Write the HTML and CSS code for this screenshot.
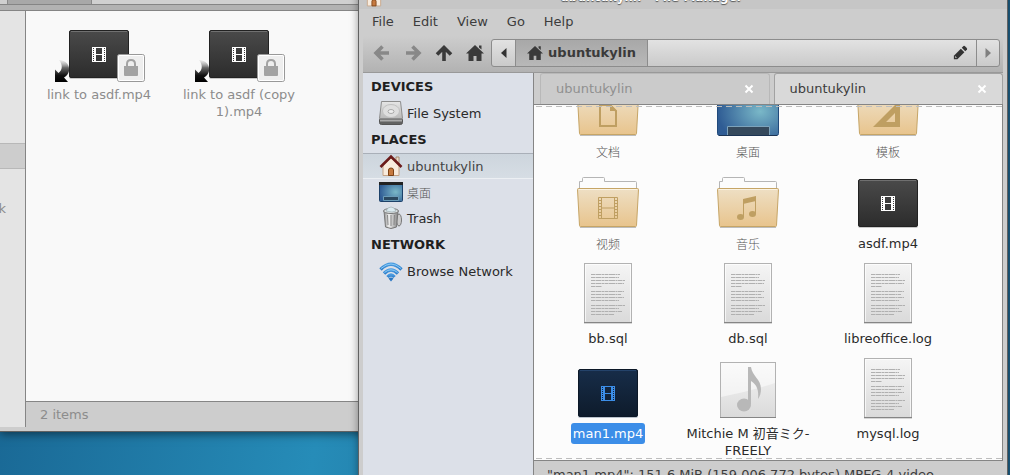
FILE: index.html
```html
<!DOCTYPE html>
<html lang="en">
<head>
<meta charset="utf-8">
<title>File Manager</title>
<link rel="stylesheet" href="styles.css">
</head>
<body>
<svg class="defs" aria-hidden="true">
  <defs>
    <linearGradient id="gTile" x1="0" y1="0" x2="0" y2="1"><stop offset="0" stop-color="#4a4a4a"/><stop offset="1" stop-color="#2c2c2c"/></linearGradient>
    <linearGradient id="gTileSel" x1="0" y1="0" x2="0" y2="1"><stop offset="0" stop-color="#172d49"/><stop offset="1" stop-color="#0e1b2b"/></linearGradient>
    <linearGradient id="gFolder" x1="0" y1="0" x2="0" y2="1"><stop offset="0" stop-color="#eedfc4"/><stop offset="1" stop-color="#e8c48d"/></linearGradient>
    <linearGradient id="gPaper" x1="0" y1="0" x2="0" y2="1"><stop offset="0" stop-color="#f5f5f5"/><stop offset="1" stop-color="#dadada"/></linearGradient>
    <linearGradient id="gArrow" x1="0" y1="0" x2="0" y2="1"><stop offset="0" stop-color="#bbb" stop-opacity=".2"/><stop offset=".35" stop-color="#666"/><stop offset=".7" stop-color="#111"/><stop offset="1" stop-color="#000"/></linearGradient>
    <radialGradient id="gDesk" cx=".7" cy=".5" r=".7"><stop offset="0" stop-color="#7ab8c8"/><stop offset="1" stop-color="#2f5c94"/></radialGradient>
    <linearGradient id="gDisk" x1="0" y1="0" x2="0" y2="1"><stop offset="0" stop-color="#e6e6e6"/><stop offset="1" stop-color="#b9b9b9"/></linearGradient>
    <linearGradient id="gCan" x1="0" y1="0" x2="1" y2="0"><stop offset="0" stop-color="#8d8d8d"/><stop offset=".35" stop-color="#f0f0f0"/><stop offset="1" stop-color="#858585"/></linearGradient>
    <linearGradient id="gWifi" x1="0" y1="0" x2="0" y2="1"><stop offset="0" stop-color="#4a9be0"/><stop offset="1" stop-color="#2f80cc"/></linearGradient>
    <g id="film">
      <path fill-rule="evenodd" d="M0 0h14v15H0zM4 1v6h6V1zM4 8v6h6V8zM1 1v1h1V1zM1 3v1h1V3zM1 5v1h1V5zM1 7v1h1V7zM1 9v1h1V9zM1 11v1h1v-1zM1 13v1h1v-1zM12 1v1h1V1zM12 3v1h1V3zM12 5v1h1V5zM12 7v1h1V7zM12 9v1h1V9zM12 11v1h1v-1zM12 13v1h1v-1z"/>
    </g>
    <g id="tile">
      <rect x="2" y="12" width="60" height="48" rx="2" fill="#000" opacity=".2"/>
      <rect x="2.5" y="11.5" width="59" height="47" rx="1.5" fill="url(#gTile)" stroke="#222"/>
      <path d="M4 12.5h56" stroke="#707070"/>
      <use href="#film" x="25" y="28" fill="#fff"/>
    </g>
    <g id="folder">
      <path d="M3.500 21V13.500H6.500V10.500Q6.500 9.500 7.500 9.500H27.500Q28.500 9.500 28.500 10.500V13.500H59.500Q60.500 13.500 60.500 14.500V21" fill="#fcfcfc" stroke="#b5b5b5"/>
      <path d="M4 59.500H60" stroke="#000" stroke-opacity=".25"/>
      <path d="M2.500 20.500H61.500Q62.500 20.500 62.500 21.500L60.500 57.500Q60.500 58.500 59.500 58.500H4.500Q3.500 58.500 3.500 57.500L1.500 21.500Q1.500 20.500 2.500 20.500z" fill="url(#gFolder)" stroke="#c6a566"/>
      <path d="M3 21.500H61" stroke="#fbf3e2"/>
    </g>
    <g id="page">
      <path d="M8 60h48" stroke="#000" stroke-opacity=".3"/>
      <rect x="8.500" y=".5" width="47" height="59" fill="url(#gPaper)" stroke="#b2b2b2"/>
      <path d="M9.500 58.500V1.500h45v57" fill="none" stroke="#fff" stroke-opacity=".7"/>
      <path d="M8 59.500h48" stroke="#858585"/>
      <path d="M15 11.500h29M15 14.500h28M15 17.500h34M15 20.500h33M15 23.500h11M15 28.500h33M15 31.500h30M15 34.500h33M15 37.500h28M15 42.500h34M15 45.500h28M15 48.500h31M15 51.500h23" stroke="#b0b0b0" stroke-dasharray="4 .5 6 .5 2 .5"/>
    </g>
    <g id="locked">
      <path d="M-8 41C-1 41 3 46 2 52Q1 56-3 58.500L1 63H-12V50.500L-8.500 54C-4.500 51-4 46-8 41z" fill="url(#gArrow)"/>
      <rect x="50.500" y="35.500" width="27" height="27" rx="2" fill="#eee" stroke="#999"/>
      <rect x="51.500" y="36.500" width="25" height="25" rx="1" fill="none" stroke="#fff"/>
      <path d="M57 47h14v9q0 1-1 1H58q-1 0-1-1z" fill="#a2a2a2"/>
      <path d="M60 48v-3q0-4 4-4t4 4v3" fill="none" stroke="#a2a2a2" stroke-width="2"/>
    </g>
    <g id="house">
      <path d="M17 3h3v7h-3z" fill="#e9dccb" stroke="#a98b72"/>
      <path d="M4 11L12 4l8 7v10.500H4z" fill="#f8ebdd" stroke="#c5a386"/>
      <path d="M1.500 13L12 2.500 22.500 13" fill="none" stroke="#6b1a1a" stroke-width="2.600"/>
      <path d="M9.500 21.500V16q0-2 2.500-2t2.500 2v5.500z" fill="#c6793f" stroke="#7b4216"/>
    </g>
    <path id="home" d="M9 1l9 8.500H15.500V17h-5v-5h-3v5h-5V9.500H0zM13 1.500h2.500v4l-2.500-2z"/>
  </defs>
</svg>

<main class="desktop">
  <section class="window back">
    <div class="back-tabs"><span class="back-tab"></span></div>
    <div class="back-band"></div>
    <div class="back-body">
      <aside class="back-side">
        <div class="back-selected"></div>
        <div class="back-place"><span>Browse Network</span></div>
      </aside>
      <div class="back-main">
        <div class="files">
          <figure class="file">
            <svg viewBox="0 0 64 60" width="64" height="60"><use href="#tile"/><use href="#locked"/></svg>
            <figcaption>link to asdf.mp4</figcaption>
          </figure>
          <figure class="file">
            <svg viewBox="0 0 64 60" width="64" height="60"><use href="#tile"/><use href="#locked"/></svg>
            <figcaption>link to asdf (copy 1).mp4</figcaption>
          </figure>
        </div>
        <footer class="back-status">2 items</footer>
      </div>
    </div>
  </section>

  <section class="window front">
    <header class="titlebar">
      <svg viewBox="0 0 24 24" width="20" height="20"><use href="#house"/></svg>
      <span class="title">ubuntukylin - File Manager</span>
    </header>
    <nav class="menubar">
      <button>File</button><button>Edit</button><button>View</button><button>Go</button><button>Help</button>
    </nav>
    <div class="toolbar">
      <button class="tool off" aria-label="Back"><svg viewBox="0 0 18 18" width="18" height="18"><path d="M16 9H4M9.500 2.500L3 9l6.500 6.500" fill="none" stroke="currentColor" stroke-width="3.600"/></svg></button>
      <button class="tool off" aria-label="Forward"><svg viewBox="0 0 18 18" width="18" height="18"><path d="M2 9h12M8.500 2.500L15 9l-6.500 6.500" fill="none" stroke="currentColor" stroke-width="3.600"/></svg></button>
      <button class="tool" aria-label="Up"><svg viewBox="0 0 18 18" width="18" height="18"><path d="M9 17V5M2 10.500L9 3.500l7 7" fill="none" stroke="currentColor" stroke-width="3.600"/></svg></button>
      <button class="tool" aria-label="Home"><svg viewBox="0 0 18 18" width="18" height="18"><use href="#home" fill="currentColor"/></svg></button>
      <div class="pathbar">
        <button class="path-prev" aria-label="Scroll left"><svg viewBox="0 0 6 10" width="6" height="10"><path d="M5.500 0v10L0 5z" fill="#333"/></svg></button>
        <button class="path-current"><svg viewBox="0 0 18 18" width="16" height="16"><use href="#home" fill="currentColor"/></svg>ubuntukylin</button>
        <button class="path-edit" aria-label="Edit location"><svg viewBox="0 0 16 16" width="14" height="14"><path d="M1 15v-4l8-8 4 4-8 8z" fill="#333"/><path d="M10 2l2-2q1-.5 2 .5l1.500 1.500q1 1 .5 2l-2 2z" fill="#333"/><path d="M2.500 13.500v-2l2 2z" fill="#ddd"/></svg></button>
        <button class="path-next" aria-label="Scroll right"><svg viewBox="0 0 6 10" width="6" height="10"><path d="M.5 0v10L6 5z" fill="#808080"/></svg></button>
      </div>
    </div>
    <div class="body">
      <aside class="sidebar">
        <h2>DEVICES</h2>
        <a href="#fs" class="place">
          <svg viewBox="0 0 24 24" width="24" height="24"><path d="M2.500.5h19l2 17H.5z" fill="url(#gDisk)" stroke="#8c8c8c"/><path d="M.5 18.500h23v3q0 2-2 2h-19q-2 0-2-2z" fill="#626262" stroke="#555"/><path d="M1 18.500h22v2H1z" fill="#aaa"/><ellipse cx="12" cy="10" rx="8.500" ry="6.500" fill="#dedede" stroke="#c0c0c0"/><ellipse cx="12" cy="10.500" rx="3" ry="2" fill="#eee" stroke="#aaa"/></svg>File System</a>
        <h2>PLACES</h2>
        <a href="#home-dir" class="place selected">
          <svg viewBox="0 0 24 24" width="24" height="24"><use href="#house"/></svg>ubuntukylin</a>
        <a href="#desk" class="place cjk">
          <svg viewBox="0 0 24 24" width="24" height="24"><rect x=".5" y="2.500" width="23" height="19" rx="1" fill="url(#gDesk)" stroke="#1d4169"/><path d="M0 2h24v3H0z" fill="#222"/><path d="M4.500 16.500h15v4h-15z" fill="#2b4960" stroke="#6a9cb8"/></svg>桌面</a>
        <a href="#trash" class="place">
          <svg viewBox="0 0 24 24" width="24" height="24"><ellipse cx="20" cy="14" rx="2.500" ry="6" fill="#ccc" stroke="#777"/><path d="M5 5h14l-1.500 16q-5.500 3-11 0z" fill="url(#gCan)" stroke="#777"/><path d="M8.500 9l.5 10M12 9v11M15.500 9l-.5 10" stroke="#888"/><ellipse cx="12" cy="5" rx="7.500" ry="2.500" fill="#d9dedf" stroke="#777"/><path d="M7 5l2-3 3-1 3 1 2 3-4 1z" fill="#dcebf0" stroke="#98a8ad" stroke-width=".6"/></svg>Trash</a>
        <h2>NETWORK</h2>
        <a href="#net" class="place">
          <svg viewBox="0 0 24 24" width="24" height="24"><g fill="none" stroke="url(#gWifi)" stroke-width="3.400"><path d="M1.500 10.500Q12 0 22.500 10.500"/><path d="M5 14.500Q12 7.500 19 14.500"/><path d="M8.500 18Q12 14 15.500 18"/></g><path d="M2 9.500Q12 .5 22 9.500M5.500 13.500Q12 8 18.500 13.500" fill="none" stroke="#8bcbf5"/><path d="M9.500 19.500q2.500-2 5 0L12 22.500z" fill="#2a78c4"/></svg>Browse Network</a>
      </aside>
      <div class="notebook">
        <div class="tabs">
          <div class="tab"><button class="tab-name">ubuntukylin</button><button class="close" aria-label="Close tab"><svg viewBox="0 0 8 8" width="8" height="8"><path d="M.5.5l7 7M7.500.5l-7 7" stroke="#fff" stroke-width="2"/></svg></button></div>
          <div class="tab active"><button class="tab-name">ubuntukylin</button><button class="close" aria-label="Close tab"><svg viewBox="0 0 8 8" width="8" height="8"><path d="M.5.5l7 7M7.500.5l-7 7" stroke="#fff" stroke-width="2"/></svg></button></div>
        </div>
        <div class="pane">
          <div class="files scrolled">
            <figure class="file cjk">
              <svg viewBox="0 3 64 57" width="64" height="57"><use href="#folder"/><path d="M24 29h10l6 6v15H24z" fill="none" stroke="#bf9f62" stroke-width="2"/><path d="M34 28l7 7h-7z" fill="#bf9f62"/></svg>
              <figcaption>文档</figcaption>
            </figure>
            <figure class="file cjk">
              <svg viewBox="0 3 64 57" width="64" height="57"><rect x="1.500" y="11.500" width="61" height="48" rx="2" fill="url(#gDesk)" stroke="#214a7b"/><path d="M11.500 59V50.500h42V59" fill="#35495c" stroke="#7da3bb"/><path d="M3 59.500h58" stroke="#1c3453"/></svg>
              <figcaption>桌面</figcaption>
            </figure>
            <figure class="file cjk">
              <svg viewBox="0 3 64 57" width="64" height="57"><use href="#folder"/><path d="M17 51L44 24v27zM30 46h9v-9z" fill="#bf9f62" fill-rule="evenodd"/></svg>
              <figcaption>模板</figcaption>
            </figure>
            <figure class="file cjk">
              <svg viewBox="0 3 64 57" width="64" height="57"><use href="#folder"/><path d="M22.500 29.500h19v21h-19zM25.500 29v22M38.500 29v22M26 40h12" fill="none" stroke="#bf9f62"/><path d="M24 32v18M40 32v18" stroke="#bf9f62" stroke-width="3" stroke-dasharray="1 2"/></svg>
              <figcaption>视频</figcaption>
            </figure>
            <figure class="file cjk">
              <svg viewBox="0 3 64 57" width="64" height="57"><use href="#folder"/><path d="M27 31l13-3v5l-13 3z" fill="#bf9f62"/><path d="M27.500 32v17M39.500 29v17" stroke="#bf9f62"/><ellipse cx="24.500" cy="49" rx="3.500" ry="3" fill="#bf9f62"/><ellipse cx="36.500" cy="46" rx="3.500" ry="3" fill="#bf9f62"/></svg>
              <figcaption>音乐</figcaption>
            </figure>
            <figure class="file">
              <svg viewBox="0 3 64 57" width="64" height="57"><use href="#tile"/></svg>
              <figcaption>asdf.mp4</figcaption>
            </figure>
            <figure class="file">
              <svg viewBox="0 0 64 60" width="64" height="60"><use href="#page"/></svg>
              <figcaption>bb.sql</figcaption>
            </figure>
            <figure class="file">
              <svg viewBox="0 0 64 60" width="64" height="60"><use href="#page"/></svg>
              <figcaption>db.sql</figcaption>
            </figure>
            <figure class="file">
              <svg viewBox="0 0 64 60" width="64" height="60"><use href="#page"/></svg>
              <figcaption>libreoffice.log</figcaption>
            </figure>
            <figure class="file picked">
              <svg viewBox="0 0 64 60" width="64" height="60"><rect x="2" y="12" width="60" height="48" rx="2" fill="#26405f" opacity=".3"/><rect x="2.500" y="11.500" width="59" height="47" rx="1.500" fill="url(#gTileSel)" stroke="#0c1827"/><path d="M4 12.500h56" stroke="#24436a"/><use href="#film" x="25" y="28" fill="#3c8ee8"/></svg>
              <figcaption>man1.mp4</figcaption>
            </figure>
            <figure class="file">
              <svg viewBox="0 0 64 60" width="64" height="60"><rect x="4.500" y="4.500" width="55" height="55" fill="url(#gPaper)" stroke="#b2b2b2"/><path d="M5 5h54v20Q32 34 5 39z" fill="#fff" opacity=".5"/><path d="M4 59.500h56" stroke="#858585"/><path d="M32 9h3c1 9 10 12 10 22 0 4-1 7-3 10 1-9-1-14-7-18v23H32z" fill="#b8b8b8"/><ellipse cx="28" cy="47" rx="7" ry="6.500" fill="#b8b8b8"/></svg>
              <figcaption>Mitchie M 初音ミク-FREELY</figcaption>
            </figure>
            <figure class="file">
              <svg viewBox="0 0 64 60" width="64" height="60"><use href="#page"/></svg>
              <figcaption>mysql.log</figcaption>
            </figure>
          </div>
        </div>
        <footer class="status">"man1.mp4": 151.6 MiB (159,006,772 bytes) MPEG-4 video</footer>
      </div>
    </div>
  </section>
</main>
</body>
</html>
```
FILE: styles.css
```css
* { box-sizing: border-box; }

body {
  margin: 0;
  font: 13px/17px "DejaVu Sans", "Noto Sans CJK SC", sans-serif;
  color: #2a2a2a;
}

button {
  margin: 0;
  padding: 0;
  border: 0;
  background: none;
  font: inherit;
  color: inherit;
}

svg { display: block; flex: none; overflow: visible; }
.defs { position: absolute; width: 0; height: 0; }

.desktop {
  position: relative;
  height: 100vh;
  overflow: hidden;
  background: linear-gradient(100deg, #17618e, #268cb8 36%, #1d5f86 75%, #1d5f86);
}

.window { position: absolute; display: flex; flex-direction: column; }

/* Background window */
.back {
  top: 0;
  left: 0;
  right: 640px;
  height: 432px;
  background: #cdcdcd;
  border-bottom: 1px solid #626262;
  box-shadow: 0 2px 9px rgba(0, 0, 0, .5);
  color: #8c8c8c;
}
.back-tabs { height: 4px; padding-left: 7px; background: #d0d0d0; }
.back-tab { display: block; width: 85px; height: 4px; background: #a8a8a8; border: solid #8a8a8a; border-width: 0 1px; }
.back-band { height: 7px; background: #b2b2b2; border: solid #858585; border-width: 1px 0; }
.back-body { flex: 1; display: flex; min-height: 0; }
.back-side { width: 26px; margin-bottom: 4px; padding-top: 132px; background: #e4e4e4; border-right: 1px solid #858585; overflow: hidden; }
.back-selected { height: 26px; background: #cdcdcd; border: solid #b8b8b8; border-width: 1px 0; }
.back-place { display: flex; justify-content: flex-end; align-items: center; height: 26px; margin-top: 26px; padding-right: 19px; white-space: nowrap; }
.back-main { flex: 1; display: flex; flex-direction: column; background: #f9f9f9; }
.back-main .files { flex: 1; padding: 8px 0 0 3px; }
.back-status { height: 30px; padding: 4px 14px; background: #cdcdcd; border-top: 1px solid #858585; }

/* Foreground window */
.front {
  top: -14px;
  left: 358px;
  right: 2px;
  bottom: -14px;
  padding: 0 4px;
  background: #cdcdcd;
  border: solid #626262;
  border-width: 0 1px;
  box-shadow: 0 0 8px rgba(0, 0, 0, .4);
}
.titlebar { display: flex; align-items: center; height: 23px; margin: 0 -4px; padding: 0 88px 0 5px; background: #c6c6c6; }
.title { flex: 1; text-align: center; font-size: 12px; font-weight: bold; color: #fff; text-shadow: 0 1px 1px #555; }

.menubar { display: flex; gap: 19px; height: 27px; padding: 0 9px 3px; color: #3c3c3c; }

.toolbar { display: flex; align-items: center; height: 37px; padding: 0 3px 3px 10px; gap: 13px; background: linear-gradient(#cdcdcd, #b2b2b2); border-bottom: 1px solid #999; color: #3a3a3a; }
.off { color: #888; }

.pathbar { flex: 1; display: flex; height: 28px; margin-left: -6px; border: 1px solid #8c8c8c; border-radius: 3px; background: linear-gradient(#e2e2e2, #cacaca); }
.pathbar button { display: flex; align-items: center; justify-content: center; }
.path-prev { width: 23px; }
.pathbar .path-current { gap: 5px; width: 133px; border: solid #8c8c8c; border-width: 0 1px; background: linear-gradient(#a8a8a8, #b8b8b8); font-weight: bold; }
.path-edit { width: 32px; margin-left: auto; }
.pathbar .path-next { width: 23px; border-left: 1px solid #8c8c8c; }

.body { flex: 1; display: flex; min-height: 0; }

.sidebar { width: 171px; background: #dce0e8; border-right: 1px solid #858585; }
.sidebar h2 { margin: 0; padding: 5px 8px; font-size: 13px; line-height: 17px; color: #1f1f1f; }
.place { display: flex; align-items: center; gap: 4px; height: 26px; padding-left: 16px; color: #2a2a2a; text-decoration: none; }
.selected { background: linear-gradient(#cdd5dd, #d6dde4); border: solid #a9afb8; border-width: 1px 0; border-bottom-color: #eceff3; color: #444; }
.cjk { font-family: "Noto Sans CJK SC", sans-serif; font-size: 12px; font-weight: 300; color: #555; }

.notebook { flex: 1; display: flex; flex-direction: column; min-width: 0; }
.tabs { display: flex; gap: 4px; height: 31px; padding-left: 6px; }
.tab { flex: 1; display: flex; align-items: center; justify-content: space-between; padding: 0 16px 1px 15px; background: #cbcbcb; border: solid #b8b8b8; border-width: 1px 1px 0; border-radius: 3px 3px 0 0; color: #909090; }
.active { background: #d9d9d9; border-color: #a2a2a2; color: #3c3c3c; }

.pane { position: relative; flex: 1; min-height: 0; overflow: hidden; background: #fcfcfc; border: 1px solid #858585; border-width: 1px 1px 1px 0; }
.pane::before,
.pane::after { content: ""; position: absolute; left: 2px; right: 0; height: 1px; background: repeating-linear-gradient(90deg, #bdbdbd 0 6px, transparent 6px 10px); pointer-events: none; }
.pane::before { top: 1px; }
.pane::after { bottom: 1px; }

.files { display: grid; grid-template-columns: repeat(auto-fill, 140px); row-gap: 11px; align-content: start; }
.scrolled { margin-top: -26px; padding-left: 4px; }
.file { display: flex; flex-direction: column; align-items: center; gap: 7px; margin: 0; }
.file figcaption { max-width: 134px; text-align: center; }
.picked figcaption { margin: -2px 0; padding: 2px; border-radius: 3px; background: #3c8ee8; color: #fff; }

.status { height: 28px; padding: 5px 13px; color: #3c3c3c; white-space: nowrap; }
```
